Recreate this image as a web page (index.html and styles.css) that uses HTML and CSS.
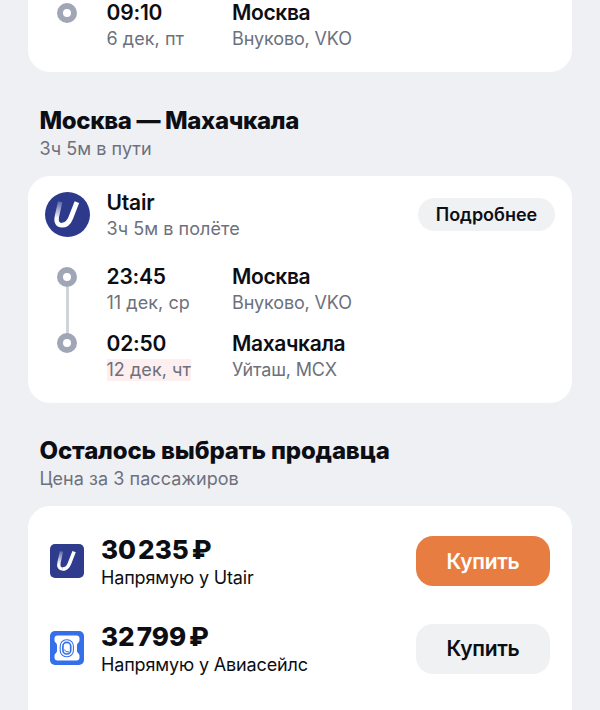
FILE: index.html
```html
<!DOCTYPE html>
<html lang="ru">
<head>
<meta charset="utf-8">
<title>Москва — Махачкала</title>
<link rel="stylesheet" href="styles.css">
</head>
<body>
<svg width="0" height="0" class="defs" aria-hidden="true">
  <defs>
    <linearGradient id="fade" gradientUnits="userSpaceOnUse" x1="14" y1="9" x2="12" y2="27">
      <stop offset="0" stop-color="#fff" stop-opacity=".2"/>
      <stop offset="1" stop-color="#fff"/>
    </linearGradient>
    <symbol id="utair" viewBox="0 0 45 45">
      <path d="M15.200 9.800L11.900 24.500C10.700 30.200 12.800 33.200 17 33.200" fill="none" stroke="url(#fade)" stroke-width="4.400"/>
      <path d="M16.900 33.200C21 33.200 23.800 30.800 25.700 26L31.900 10.200" fill="none" stroke="#fff" stroke-width="4.800" stroke-linejoin="round"/>
    </symbol>
  </defs>
</svg>
<main class="page">
  <section class="card card-top">
    <div class="stop">
      <span class="rail rail-end"><i class="dot"></i></span>
      <div><b class="strong time">09:10</b><span class="muted">6 дек, пт</span></div>
      <div><b class="strong">Москва</b><span class="muted port">Внуково, VKO</span></div>
    </div>
  </section>

  <header class="heading">
    <h2 class="route-title">Москва — Махачкала</h2>
    <p class="muted">3ч 5м в пути</p>
  </header>

  <section class="card card-flight">
    <div class="carrier">
      <span class="logo-round"><svg viewBox="0 0 45 45"><use href="#utair"/></svg></span>
      <div class="carrier-text"><b class="strong name">Utair</b><span class="muted">3ч 5м в полёте</span></div>
      <button class="more">Подробнее</button>
    </div>
    <div class="stop stop-from">
      <span class="rail"><i class="dot"></i></span>
      <div><b class="strong time">23:45</b><span class="muted">11 дек, ср</span></div>
      <div><b class="strong">Москва</b><span class="muted port">Внуково, VKO</span></div>
    </div>
    <div class="stop">
      <span class="rail rail-end"><i class="dot"></i></span>
      <div><b class="strong time">02:50</b><span class="muted"><mark>12 дек, чт</mark></span></div>
      <div><b class="strong">Махачкала</b><span class="muted port">Уйташ, MCX</span></div>
    </div>
  </section>

  <header class="heading heading-sellers">
    <h2 class="sellers-title">Осталось выбрать продавца</h2>
    <p class="muted">Цена за 3 пассажиров</p>
  </header>

  <section class="card card-sellers">
    <div class="seller">
      <span class="logo-square utair"><svg viewBox="0 0 45 45"><use href="#utair"/></svg></span>
      <div class="offer"><div class="price"><span>30</span><span>235</span><span class="ruble">₽</span></div><p class="via">Напрямую у Utair</p></div>
      <button class="buy buy-main">Купить</button>
    </div>
    <div class="seller">
      <span class="logo-square aviasales">
        <svg viewBox="0 0 34 34">
          <path d="M7.500 4.500H26.500Q29.500 4.500 29.500 7.500V9.500C29.500 11.500 27 11.800 27 14V20C27 22.200 29.500 22.500 29.500 24.500V26.500Q29.500 29.500 26.500 29.500H7.500Q4.500 29.500 4.500 26.500V24.500C4.500 22.500 7 22.200 7 20V14C7 11.800 4.500 11.500 4.500 9.500V7.500Q4.500 4.500 7.500 4.500Z" fill="#fff"/>
          <rect x="10.200" y="8.800" width="13.200" height="17" rx="6.200" fill="none" stroke="#356fea" stroke-width="1.100"/>
          <rect x="12.900" y="11.400" width="7.800" height="11.600" rx="3.700" fill="none" stroke="#356fea" stroke-width="1.700"/>
          <path d="M14 18.500Q15.500 21.200 19 21" fill="none" stroke="#356fea" stroke-width="1"/>
        </svg>
      </span>
      <div class="offer"><div class="price"><span>32</span><span>799</span><span class="ruble">₽</span></div><p class="via">Напрямую у Авиасейлс</p></div>
      <button class="buy">Купить</button>
    </div>
  </section>
</main>
</body>
</html>
```
FILE: styles.css
```css
* { box-sizing: border-box; }
body {
  margin: 0;
  background: #eff0f4;
  color: #0c0e14;
  font-family: Inter, "Liberation Sans", sans-serif;
  height: 710px;
  overflow: hidden;
}
h2, p { margin: 0; }
button { border: 0; font-family: inherit; color: inherit; padding: 0; }
svg { display: block; }
.defs { position: absolute; }
.page { padding: 0 28px; height: 710px; display: flex; flex-direction: column; }
.card { background: #fff; border-radius: 22px; }
.card-top { height: 72px; border-radius: 0 0 22px 22px; flex: none; }
.strong { display: block; font-size: 21px; line-height: 26px; font-weight: 600; letter-spacing: -.35px; }
.time { letter-spacing: -.2px; }
.muted { display: block; font-size: 18px; line-height: 26px; color: #6d717d; letter-spacing: .05px; }
.port { letter-spacing: -.15px; }
.stop { display: grid; grid-template-columns: 78.500px 125.500px 1fr; height: 66.500px; }
.rail { display: flex; flex-direction: column; align-items: center; padding-top: 2.500px; }
.rail::after { content: ""; width: 3px; flex: 1; margin-bottom: -3px; background: #cfd3da; }
.rail-end::after { display: none; }
.dot { width: 20px; height: 20px; flex: none; border: 6px solid #a0a6b5; border-radius: 50%; background: #fff; }
.heading { padding: 32.500px 11.500px 0; height: 104px; flex: none; }
.heading h2 { font-size: 24px; line-height: 32px; font-weight: 800; white-space: nowrap; letter-spacing: -.36px; }
.heading .sellers-title { letter-spacing: -.14px; }
.heading .muted { line-height: 23px; }
.card-flight { height: 226.500px; padding-top: 13px; flex: none; }
.carrier { display: flex; padding: 0 17px 0 16.500px; height: 75px; align-items: flex-start; }
.logo-round { width: 45px; height: 45px; margin-top: 3px; border-radius: 50%; background: #2d3a8c; }
.carrier-text { margin: .5px 0 0 17px; flex: 1; }
.name { letter-spacing: -.2px; }
.more { width: 137px; height: 33px; margin-top: 9px; border-radius: 17px; background: #f0f1f3; font-size: 18px; font-weight: 600; }
mark { background: #fdeeef; color: inherit; display: inline-block; line-height: 22px; }
.heading-sellers { height: 103.500px; }
.card-sellers { flex: 1; padding: 28px 22px 0; border-radius: 22px 22px 0 0; }
.seller { display: flex; height: 87.500px; align-items: flex-start; }
.logo-square { width: 34px; height: 34px; margin-top: 9.500px; border-radius: 5px; overflow: hidden; }
.utair { background: #2f3b8c; }
.aviasales { background: #356fea; }
.offer { margin: .5px 0 0 17px; flex: 1; }
.price { display: flex; font-size: 26px; line-height: 30px; font-weight: 800; gap: 2px; }
.ruble { margin-left: 1px; }
.via { font-size: 18px; line-height: 26px; letter-spacing: -.15px; }
.buy { width: 134px; height: 50px; margin-top: 2px; border-radius: 17px; background: #f0f1f3; font-size: 21px; font-weight: 600; letter-spacing: -.3px; }
.buy-main { background: #e87d42; color: #fff; }
```
